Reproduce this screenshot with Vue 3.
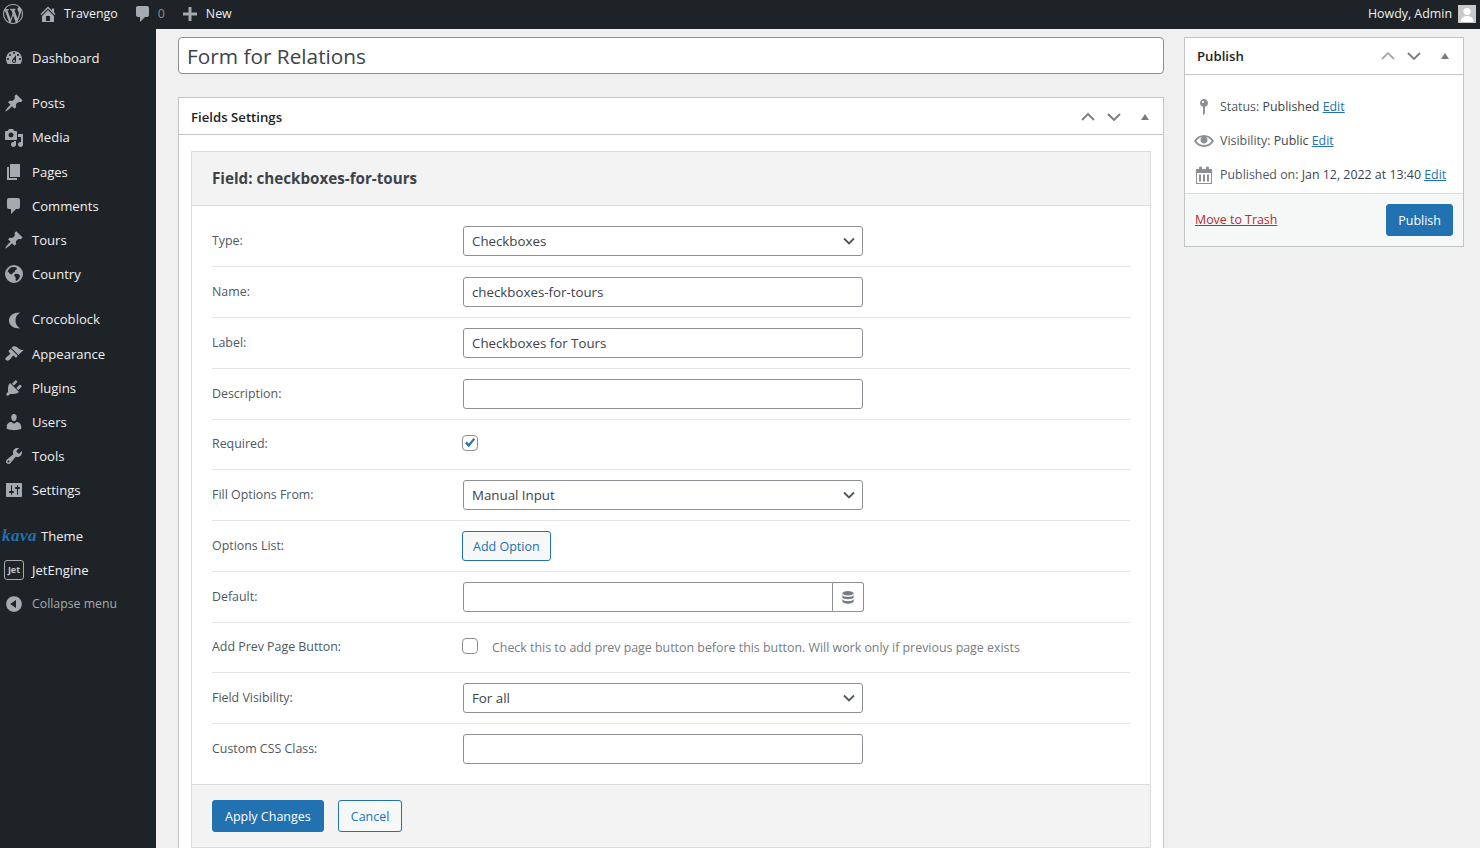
<script setup>
const icons = {
  dashboard: 'M3.76 16h12.48c1.1-1.37 1.76-3.11 1.76-5 0-4.42-3.58-8-8-8s-8 3.58-8 8c0 1.89.66 3.63 1.76 5zM10 4c.55 0 1 .45 1 1s-.45 1-1 1-1-.45-1-1 .45-1 1-1zM6 6c.55 0 1 .45 1 1s-.45 1-1 1-1-.45-1-1 .45-1 1-1zm8 0c.55 0 1 .45 1 1s-.45 1-1 1-1-.45-1-1 .45-1 1-1zm-5.37 5.55L12 7v6c0 1.1-.9 2-2 2s-2-.9-2-2c0-.57.24-1.08.63-1.45zM4 10c.55 0 1 .45 1 1s-.45 1-1 1-1-.45-1-1 .45-1 1-1zm12 0c.55 0 1 .45 1 1s-.45 1-1 1-1-.45-1-1 .45-1 1-1zm-5 3c0-.55-.45-1-1-1s-1 .45-1 1 .45 1 1 1 1-.45 1-1z',
  pin: 'M10.44 3.02l1.82-1.82 6.36 6.35-1.83 1.82c-1.05-.68-2.48-.57-3.41.36l-.75.75c-.92.93-1.04 2.35-.35 3.41l-1.83 1.82-2.41-2.41-2.8 2.79c-.42.42-3.38 2.71-3.8 2.29s1.86-3.39 2.28-3.81l2.79-2.79L4.1 9.36l1.83-1.82c1.05.69 2.48.57 3.4-.36l.75-.75c.93-.92 1.05-2.35.36-3.41z',
  media: 'M13 11V4c0-.55-.45-1-1-1h-1.67L9 1H5L3.67 3H2c-.55 0-1 .45-1 1v7c0 .55.45 1 1 1h10c.55 0 1-.45 1-1zM7 4.5c1.38 0 2.5 1.12 2.5 2.5S8.38 9.5 7 9.5 4.5 8.38 4.5 7 5.62 4.5 7 4.5zM14 6h5v10.5c0 1.38-1.12 2.5-2.5 2.5S14 17.88 14 16.5s1.12-2.5 2.5-2.5c.17 0 .34.02.5.05V9h-3V6zm-4 8.05V13h2v3.5c0 1.38-1.12 2.5-2.5 2.5S7 17.88 7 16.5 8.12 14 9.5 14c.17 0 .34.02.5.05z',
  page: 'M6 15V2h10v13H6zm-1 1h8v2H3V5h2v11z',
  comment: 'M5 2h9c1.1 0 2 .9 2 2v7c0 1.1-.9 2-2 2h-2l-5 5v-5H5c-1.1 0-2-.9-2-2V4c0-1.1.9-2 2-2z',
  globe: 'M10 1a9 9 0 1 0 0 18 9 9 0 0 0 0-18zM7.500 3.300c1.700-.6 3.500-.5 5 .2l.3 1.700-1.800 1.300-.4 1.600-1.900.7-.6 1.700-2.100-.4-1.500-2.200-1 .5C3.900 6 5.400 4.100 7.500 3.300zm4 6.400l2.800.4 1.900 1.600-1.200 3.100-2.200 2.200-1.300-.7.300-2.500-1.500-1.800.3-1.700z',
  croco: 'M16 2.500C9 2.500 5 6 5 10.500S9 18.500 16 18.500C12.500 16 11.500 13.500 11.500 10.500S12.500 5 16 2.500z',
  appearance: 'M14.480 11.060L7.410 3.990l1.500-1.500c.5-.56 2.300-.47 3.510.32 1.210.8 1.430 1.280 2.910 2.100 1.180.64 2.450 1.260 4.450.85zm-.71.71L6.700 4.700 4.930 6.470c-.39.39-.39 1.020 0 1.410l1.060 1.060c.39.39.39 1.030 0 1.420-.6.6-1.430 1.110-2.210 1.690-.35.26-.7.53-1.010.84C1.430 13.230.76 14.910 1.980 16.100c1.220 1.200 2.900.53 4.230-.8.3-.31.58-.66.84-1.020.57-.78 1.100-1.600 1.690-2.210.39-.39 1.020-.39 1.410 0l1.060 1.060c.39.39 1.020.39 1.410 0z',
  plugin: 'M13.110 4.360L9.870 7.600 8 5.730l3.240-3.240c.35-.34 1.050-.2 1.560.32.52.51.66 1.210.31 1.550zm-8 1.770l.91-1.120 9.010 9.010-1.190.84c-.71.71-2.630 1.160-3.820 1.160H6.140L4.900 17.260c-.59.59-1.540.59-2.120 0-.59-.58-.59-1.530 0-2.120l1.240-1.240v-3.880c0-1.130.4-3.190 1.090-3.890zm7.260 3.970l3.240-3.240c.34-.35 1.040-.21 1.550.31.52.51.66 1.210.31 1.550l-3.240 3.250z',
  users: 'M10 9.250c-2.270 0-2.730-3.440-2.730-3.440C7 4.020 7.820 2 9.970 2c2.160 0 2.980 2.020 2.710 3.810 0 0-.41 3.440-2.680 3.440zm0 2.570L12.720 10c2.390 0 4.520 2.330 4.520 4.530v2.490s-3.650 1.130-7.240 1.130c-3.650 0-7.240-1.130-7.240-1.130v-2.490c0-2.250 1.940-4.480 4.470-4.480z',
  tools: 'M16.680 9.770c-1.340 1.340-3.300 1.670-4.950.99l-5.410 6.520c-.99.99-2.590.99-3.580 0s-.99-2.590 0-3.570l6.520-5.420c-.68-1.650-.35-3.610.99-4.950 1.280-1.280 3.120-1.620 4.720-1.060l-2.890 2.890 2.820 2.820 2.860-2.870c.53 1.580.18 3.390-1.080 4.650zM3.810 16.210c.4.39 1.040.39 1.430 0 .4-.4.4-1.040 0-1.430-.39-.4-1.030-.4-1.430 0-.39.39-.39 1.030 0 1.430z',
  settings: 'M18 16V4c0-.55-.45-1-1-1H3c-.55 0-1 .45-1 1v12c0 .55.45 1 1 1h14c.55 0 1-.45 1-1zM8 11h1c.55 0 1 .45 1 1s-.45 1-1 1H8v1.500c0 .28-.22.5-.5.5s-.5-.22-.5-.5V13H6c-.55 0-1-.45-1-1s.45-1 1-1h1V5.500c0-.28.22-.5.5-.5s.5.22.5.5V11zm5-2h-1c-.55 0-1-.45-1-1s.45-1 1-1h1V5.500c0-.28.22-.5.5-.5s.5.22.5.5V7h1c.55 0 1 .45 1 1s-.45 1-1 1h-1v5.500c0 .28-.22.5-.5.5s-.5-.22-.5-.5V9z',
  collapse: 'M10 2.160c4.330 0 7.840 3.510 7.840 7.840s-3.510 7.840-7.840 7.840S2.160 14.330 2.160 10 5.710 2.160 10 2.160zm2 11.720V6.120L6.180 9.970z',
  home: 'M16 8.500l1.530 1.530-1.060 1.060L10 4.620l-6.470 6.470-1.060-1.060L10 2.500l4 4v-2h2v4zm-6-2.460l6 5.990V18H4v-5.970zM12 17v-5H8v5h4z',
  plus: 'M17 8.500v3h-5.500V17h-3v-5.500H3v-3h5.500V3h3v5.500z',
  wp: 'M20 10c0-5.510-4.490-10-10-10C4.480 0 0 4.490 0 10c0 5.520 4.480 10 10 10 5.510 0 10-4.480 10-10zM7.780 15.370L4.370 6.220c.55-.02 1.170-.08 1.170-.08.5-.06.44-1.130-.06-1.110 0 0-1.450.11-2.370.11-.18 0-.37 0-.58-.01C4.120 2.690 6.870 1.110 10 1.110c2.330 0 4.450.87 6.050 2.340-.68-.11-1.650.39-1.650 1.580 0 .74.45 1.360.9 2.100.35.61.55 1.360.55 2.460 0 1.490-1.400 5-1.400 5l-3.030-8.370c.54-.02.82-.17.82-.17.5-.05.44-1.250-.06-1.220 0 0-1.440.12-2.380.12-.87 0-2.330-.12-2.330-.12-.5-.03-.56 1.200-.06 1.220l.92.08 1.260 3.410zM17.410 10c.24-.64.74-1.870.43-4.250.7 1.290 1.050 2.710 1.050 4.250 0 3.290-1.730 6.240-4.400 7.780.97-2.590 1.940-5.200 2.920-7.780zM6.100 18.090C3.120 16.650 1.110 13.530 1.110 10c0-1.300.23-2.480.72-3.590C3.250 10.300 4.670 14.200 6.100 18.090zm4.030-6.630l2.580 6.980c-.86.29-1.760.45-2.710.45-.79 0-1.570-.11-2.290-.33.81-2.380 1.620-4.740 2.420-7.100z',
  status: 'M14 6c0 1.860-1.280 3.410-3 3.860V16c0 1-2 2-2 2V9.860c-1.720-.45-3-2-3-3.860 0-2.210 1.790-4 4-4s4 1.790 4 4zM8 5c0 .55.45 1 1 1s1-.45 1-1-.45-1-1-1-1 .45-1 1z',
  eye: 'M19.700 9.400C17.700 6 14 3.900 10 3.900S2.300 6 .3 9.400L0 10l.3.6c2 3.400 5.700 5.500 9.700 5.500s7.700-2.100 9.700-5.500l.3-.6-.3-.6zM10 14.100c-3.100 0-6-1.600-7.700-4.100C3.600 8 5.700 6.600 8 6.100c-.9.6-1.500 1.700-1.500 2.900 0 1.900 1.600 3.500 3.500 3.500s3.500-1.600 3.500-3.500c0-1.200-.6-2.300-1.500-2.900 2.300.5 4.400 1.900 5.700 3.900-1.700 2.500-4.600 4.100-7.700 4.100z',
  calendar: 'M15 4h3v15H2V4h3V3c0-.41.15-.76.44-1.060.29-.29.65-.44 1.060-.44s.77.15 1.060.44c.29.3.44.65.44 1.060v1h4V3c0-.41.15-.76.44-1.060.29-.29.65-.44 1.060-.44s.77.15 1.060.44c.29.3.44.65.44 1.060v1zM3 18h14V8H3v10zM5 9.500h2V16.500H5zM9 9.500h2V16.500H9zM13 9.500h2V16.500h-2z'
}

const menuGroups = [
  [{ name: 'Dashboard', icon: 'dashboard' }],
  [
    { name: 'Posts', icon: 'pin' },
    { name: 'Media', icon: 'media' },
    { name: 'Pages', icon: 'page' },
    { name: 'Comments', icon: 'comment' },
    { name: 'Tours', icon: 'pin' },
    { name: 'Country', icon: 'globe' }
  ],
  [
    { name: 'Crocoblock', icon: 'croco' },
    { name: 'Appearance', icon: 'appearance' },
    { name: 'Plugins', icon: 'plugin' },
    { name: 'Users', icon: 'users' },
    { name: 'Tools', icon: 'tools' },
    { name: 'Settings', icon: 'settings' }
  ]
]

const fields = [
  { label: 'Type:', kind: 'select', value: 'Checkboxes' },
  { label: 'Name:', kind: 'input', value: 'checkboxes-for-tours' },
  { label: 'Label:', kind: 'input', value: 'Checkboxes for Tours' },
  { label: 'Description:', kind: 'input', value: '' },
  { label: 'Required:', kind: 'check', checked: true },
  { label: 'Fill Options From:', kind: 'select', value: 'Manual Input' },
  { label: 'Options List:', kind: 'button', value: 'Add Option' },
  { label: 'Default:', kind: 'addon', value: '' },
  { label: 'Add Prev Page Button:', kind: 'check', checked: false, note: 'Check this to add prev page button before this button. Will work only if previous page exists' },
  { label: 'Field Visibility:', kind: 'select', value: 'For all' },
  { label: 'Custom CSS Class:', kind: 'input', value: '' }
]
</script>

<template>
  <div class="page">
    <header class="adminbar">
      <svg class="bar-wp" viewBox="0 0 20 20"><path :d="icons.wp" /></svg>
      <svg class="bar-home" viewBox="0 0 20 20"><path :d="icons.home" /></svg>
      <span class="bar-site">Travengo</span>
      <svg class="bar-comment" viewBox="0 0 20 20"><path :d="icons.comment" /></svg>
      <span class="bar-count">0</span>
      <svg class="bar-plus" viewBox="0 0 20 20"><path :d="icons.plus" /></svg>
      <span class="bar-new">New</span>
      <span class="bar-howdy">Howdy, Admin</span>
      <svg class="bar-avatar" viewBox="0 0 18 18">
        <rect width="18" height="18" fill="#c9c9c9" />
        <circle cx="9" cy="6.500" r="3.600" fill="#fff" />
        <path d="M2.500 17c0-4 3-6 6.500-6s6.500 2 6.500 6z" fill="#fff" />
      </svg>
    </header>

    <div class="layout">
      <aside class="sidebar">
        <ul v-for="(group, i) in menuGroups" :key="i" class="menu-group">
          <li v-for="item in group" :key="item.name" class="menu-item">
            <svg class="menu-icon" viewBox="0 0 20 20"><path :d="icons[item.icon]" fill-rule="evenodd" /></svg>
            <span>{{ item.name }}</span>
          </li>
        </ul>
        <ul class="menu-group">
          <li class="menu-item">
            <span class="kava">kava</span>
            <span>Theme</span>
          </li>
          <li class="menu-item">
            <span class="jet-logo">Jet</span>
            <span>JetEngine</span>
          </li>
          <li class="menu-item collapse">
            <svg class="menu-icon" viewBox="0 0 20 20"><path :d="icons.collapse" /></svg>
            <span>Collapse menu</span>
          </li>
        </ul>
      </aside>

      <main class="content">
        <div class="main-col">
          <input class="title-input" type="text" value="Form for Relations" />

          <section class="box fields-box">
            <div class="box-head">
              <h2>Fields Settings</h2>
              <div class="box-tools">
                <svg class="chev" viewBox="0 0 16 10"><path d="M2 8l6-6 6 6" /></svg>
                <svg class="chev" viewBox="0 0 16 10"><path d="M2 2l6 6 6-6" /></svg>
                <span class="tri"></span>
              </div>
            </div>

            <div class="box-body">
              <div class="field-panel">
                <div class="panel-head">Field: checkboxes-for-tours</div>
                <div class="panel-rows">
                  <div v-for="field in fields" :key="field.label" class="row" :class="field.kind">
                    <label class="row-label">{{ field.label }}</label>
                    <div class="row-value">
                      <select v-if="field.kind === 'select'" class="ctl sel">
                        <option>{{ field.value }}</option>
                      </select>
                      <input v-else-if="field.kind === 'input'" class="ctl" type="text" :value="field.value" />
                      <div v-else-if="field.kind === 'addon'" class="addon-wrap">
                        <input class="ctl addon-input" type="text" :value="field.value" />
                        <span class="addon-btn">
                          <svg viewBox="0 0 12 13" width="12" height="13">
                            <ellipse cx="6" cy="2.300" rx="5.700" ry="2.200" />
                            <path d="M.3 4.100c1 1.300 3 1.800 5.700 1.800s4.700-.5 5.700-1.800v2.200c0 1.200-2.500 2-5.700 2S.3 7.500.3 6.300zM.3 8.200c1 1.300 3 1.800 5.700 1.800s4.700-.5 5.700-1.800v2.400c0 1.200-2.500 2.100-5.700 2.100S.3 11.800.3 10.600z" />
                          </svg>
                        </span>
                      </div>
                      <button v-else-if="field.kind === 'button'" class="btn btn-outline add-option" type="button">{{ field.value }}</button>
                      <template v-else>
                        <span class="checkbox">
                          <svg v-if="field.checked" viewBox="0 0 16 16" width="16" height="16"><path d="M3 8.200l1.700-1.700 2 2.200L11.600 3l1.500 1.300-6.300 8z" /></svg>
                        </span>
                        <span v-if="field.note" class="note">{{ field.note }}</span>
                      </template>
                    </div>
                  </div>
                </div>
                <div class="panel-foot">
                  <button class="btn btn-primary" type="button">Apply Changes</button>
                  <button class="btn btn-outline cancel" type="button">Cancel</button>
                </div>
              </div>
            </div>
          </section>
        </div>

        <section class="box publish-box">
          <div class="box-head">
            <h2>Publish</h2>
            <div class="box-tools">
              <svg class="chev light" viewBox="0 0 16 10"><path d="M2 8l6-6 6 6" /></svg>
              <svg class="chev" viewBox="0 0 16 10"><path d="M2 2l6 6 6-6" /></svg>
              <span class="tri"></span>
            </div>
          </div>
          <div class="publish-rows">
            <div class="pub-row">
              <svg viewBox="0 0 20 20"><path :d="icons.status" fill-rule="evenodd" /></svg>
              <span>Status: <b>Published</b> <a>Edit</a></span>
            </div>
            <div class="pub-row">
              <svg viewBox="0 0 20 20"><path :d="icons.eye" /></svg>
              <span>Visibility: <b>Public</b> <a>Edit</a></span>
            </div>
            <div class="pub-row">
              <svg viewBox="0 0 20 20"><path :d="icons.calendar" fill-rule="evenodd" /></svg>
              <span>Published on: <b>Jan 12, 2022 at 13:40</b> <a>Edit</a></span>
            </div>
          </div>
          <div class="publish-foot">
            <a class="trash">Move to Trash</a>
            <button class="btn btn-primary pub-btn" type="button">Publish</button>
          </div>
        </section>
      </main>
    </div>
  </div>
</template>

<style scoped>
.page { height: 848px; display: flex; flex-direction: column; overflow: hidden; background: #f0f0f1; color: #3c434a; font: 12.4px/1.4 "Open Sans", "Noto Sans", sans-serif; }
svg { fill: currentColor; flex: none; display: block; }

.adminbar { height: 29px; box-sizing: border-box; flex: none; display: flex; align-items: center; padding: 0 4px 2px 0; background: #1d2327; color: #f0f0f1; }
.adminbar svg { color: #a7aaad; }
.bar-wp { width: 20px; height: 20px; margin-left: 3px; }
.bar-home { width: 20px; height: 20px; margin-left: 15px; }
.bar-site { margin-left: 6px; }
.bar-comment { width: 20px; height: 20px; margin-left: 15px; }
.bar-count { margin-left: 5px; color: #8c8f94; }
.bar-plus { width: 20px; height: 20px; margin-left: 15px; }
.bar-new { margin-left: 6px; }
.bar-howdy { margin-left: auto; }
.adminbar .bar-avatar { width: 18px; height: 18px; margin-left: 6px; }

.layout { flex: 1; min-height: 0; display: flex; }

.sidebar { width: 156px; flex: none; padding-top: 12.15px; background: #1d2327; color: #f0f0f1; }
.menu-group { list-style: none; margin: 0 0 11px; padding: 0; }
.menu-item { height: 34.2px; display: flex; align-items: center; gap: 8px; padding-left: 4px; font-size: 13.1px; }
.menu-icon { width: 20px; height: 20px; color: #a7aaad; }
.kava { width: 31px; margin-left: -2px; color: #2271b1; font: italic 700 17px/1 "Liberation Serif", serif; letter-spacing: .5px; }
.jet-logo { width: 20px; height: 20px; box-sizing: border-box; border: 1px solid #a7aaad; border-radius: 3px; color: #c3c4c7; font-size: 9px; font-weight: 700; line-height: 18px; text-align: center; }
.collapse { color: #a7aaad; font-size: 12.3px; }

.content { flex: 1; display: flex; gap: 20px; padding: 8px 16px 0 22px; min-width: 0; }
.main-col { width: 986px; flex: none; }
.title-input { width: 100%; height: 37px; box-sizing: border-box; display: block; margin: 0 0 23px; padding: 0 8px; border: 1px solid #8c8f94; border-radius: 4px; background: #fff; color: #3c434a; font: 20.8px "Open Sans", "Noto Sans", sans-serif; outline: none; }

.box { box-sizing: border-box; border: 1px solid #c3c4c7; background: #fff; }
.box-head { height: 37px; box-sizing: border-box; display: flex; align-items: center; justify-content: space-between; padding: 0 12px; border-bottom: 1px solid #c3c4c7; }
.fields-box .box-head { padding-top: 2px; }
.box-head h2 { margin: 0; color: #1d2327; font-size: 13.2px; font-weight: 600; }
.box-tools { display: flex; align-items: center; gap: 10px; color: #787c82; }
.chev { width: 16px; height: 10px; fill: none; stroke: #787c82; stroke-width: 1.8; }
.chev.light { stroke: #a7aaad; }
.tri { width: 0; height: 0; margin-left: 9px; margin-right: 2px; border: 4px solid transparent; border-top: 0; border-bottom: 6px solid #787c82; }

.fields-box { height: 900px; }
.box-body { padding: 16px 12px 0; }
.field-panel { border: 1px solid #dcdcde; }
.panel-head { height: 53px; display: flex; align-items: center; padding: 0 20px; background: #f3f3f3; border-bottom: 1px solid #dcdcde; color: #3c434a; font-size: 15.2px; font-weight: 700; }
.panel-rows { padding: 10px 20px; }
.row { display: flex; align-items: center; padding: 10px 0; border-bottom: 1px solid #e4e4e4; }
.row:last-child { border-bottom: 0; }
.row-label { width: 251px; flex: none; margin-bottom: 1px; color: #50575e; }
.row-value { display: flex; align-items: center; min-height: 29px; }
.ctl { width: 400px; height: 30px; box-sizing: border-box; padding: 0 8px; border: 1px solid #8c8f94; border-radius: 3px; background: #fff; color: #3c434a; font: 13.3px "Open Sans", "Noto Sans", sans-serif; outline: none; }
.sel { appearance: none; padding-right: 24px; background: #fff url("data:image/svg+xml,%3Csvg xmlns='http://www.w3.org/2000/svg' width='12' height='8' viewBox='0 0 12 8'%3E%3Cpath d='M1 1.500l5 5 5-5' fill='none' stroke='%2350575e' stroke-width='1.800'/%3E%3C/svg%3E") no-repeat right 7px center; }
.addon-wrap { display: flex; }
.addon-input { width: 370px; border-radius: 3px 0 0 3px; }
.addon-btn { width: 31px; height: 30px; box-sizing: border-box; display: flex; align-items: center; justify-content: center; border: 1px solid #8c8f94; border-left: 0; border-radius: 0 3px 3px 0; color: #787c82; }
.checkbox { width: 16px; height: 16px; box-sizing: border-box; display: block; margin: 0 0 3px -1px; border: 1px solid #8c8f94; border-radius: 4px; background: #fff; color: #2271b1; }
.checkbox svg { margin: -1px; }
.note { margin-left: 14px; color: #787c82; }

.btn { height: 30px; box-sizing: border-box; padding: 0 10px; border: 1px solid #2271b1; border-radius: 3px; font: 12.5px "Open Sans", "Noto Sans", sans-serif; }
.btn-primary { height: 32px; padding: 0 12px; background: #2271b1; color: #fff; }
.pub-btn { padding: 0 11px; }
.btn-outline { background: #f6f7f7; color: #2271b1; }
.add-option { margin-left: -1px; }
.cancel { height: 32px; margin-left: 14px; padding: 0 12px; }
.panel-foot { height: 62px; display: flex; align-items: center; padding: 0 20px; background: #f3f3f3; border-top: 1px solid #dcdcde; }

.publish-box { width: 280px; height: 210px; flex: none; }
.publish-rows { padding: 15px 12px 0 9px; height: 118px; box-sizing: border-box; }
.pub-row { height: 34px; display: flex; align-items: center; gap: 6px; color: #50575e; }
.pub-row svg { width: 20px; height: 20px; color: #8c8f94; }
.pub-row b { font-weight: 500; color: #3c434a; }
.pub-row a { color: #2271b1; text-decoration: underline; }
.publish-foot { height: 53px; box-sizing: border-box; display: flex; align-items: center; justify-content: space-between; padding: 0 10px; background: #f6f7f7; border-top: 1px solid #dcdcde; }
.trash { color: #b32d2e; text-decoration: underline; }
</style>

<style>
html, body { margin: 0; padding: 0; background: #f0f0f1; }
</style>
